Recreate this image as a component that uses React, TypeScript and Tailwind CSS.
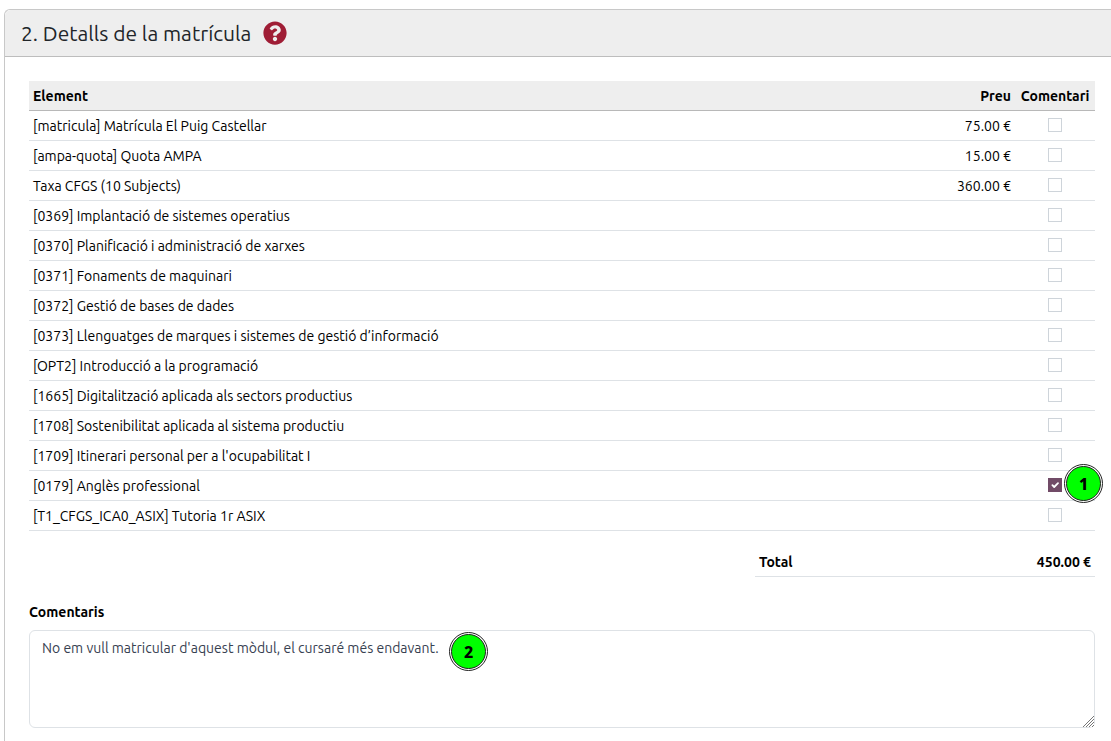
import { useState } from "react";

type Line = { id: string; name: string; price?: string };

const lines: Line[] = [
  { id: "matricula", name: "[matricula] Matrícula El Puig Castellar", price: "75.00 €" },
  { id: "ampa", name: "[ampa-quota] Quota AMPA", price: "15.00 €" },
  { id: "taxa", name: "Taxa CFGS (10 Subjects)", price: "360.00 €" },
  { id: "0369", name: "[0369] Implantació de sistemes operatius" },
  { id: "0370", name: "[0370] Planificació i administració de xarxes" },
  { id: "0371", name: "[0371] Fonaments de maquinari" },
  { id: "0372", name: "[0372] Gestió de bases de dades" },
  { id: "0373", name: "[0373] Llenguatges de marques i sistemes de gestió d’informació" },
  { id: "opt2", name: "[OPT2] Introducció a la programació" },
  { id: "1665", name: "[1665] Digitalització aplicada als sectors productius" },
  { id: "1708", name: "[1708] Sostenibilitat aplicada al sistema productiu" },
  { id: "1709", name: "[1709] Itinerari personal per a l'ocupabilitat I" },
  { id: "0179", name: "[0179] Anglès professional" },
  { id: "tutoria", name: "[T1_CFGS_ICA0_ASIX] Tutoria 1r ASIX" },
];

function Marker({ value, className }: { value: number; className: string }) {
  return (
    <span
      className={`absolute z-10 flex size-[39px] items-center justify-center rounded-full border border-[#222222] bg-white p-px ${className}`}
    >
      <span className="flex size-full items-center justify-center rounded-full border border-[#222222] bg-[#00ff00] font-['Noto_Sans',sans-serif] text-base font-extrabold text-black">
        {value}
      </span>
    </span>
  );
}

function CommentCheckbox({
  label,
  checked,
  onChange,
}: {
  label: string;
  checked: boolean;
  onChange: () => void;
}) {
  return (
    <span className="relative block size-3.5">
      <input
        type="checkbox"
        aria-label={label}
        checked={checked}
        onChange={onChange}
        className="peer block size-3.5 appearance-none border border-[#ced4da] bg-white checked:border-[#714b67] checked:bg-[#714b67]"
      />
      <svg
        viewBox="0 0 14 14"
        className="pointer-events-none absolute inset-0 hidden size-3.5 peer-checked:block"
        fill="none"
        stroke="white"
        strokeWidth="1.8"
        strokeLinecap="round"
        strokeLinejoin="round"
      >
        <path d="M4.400 7.200 6.200 9 10 5.200" />
      </svg>
    </span>
  );
}

export default function App() {
  const [selected, setSelected] = useState<string[]>(["0179"]);
  const [comment, setComment] = useState(
    "No em vull matricular d'aquest mòdul, el cursaré més endavant.",
  );

  const toggle = (id: string) =>
    setSelected((current) =>
      current.includes(id) ? current.filter((item) => item !== id) : [...current, id],
    );

  return (
    <div className="flex min-h-screen flex-col overflow-x-hidden bg-white pt-[9px] pl-1 font-['Ubuntu','Noto_Sans',sans-serif] text-sm text-black">
      <section className="flex-1 rounded-tl-md border-t border-l border-[#c8c8c8]">
        <header className="flex h-[47px] items-center gap-3 rounded-tl-md border-b border-[#bdbdbd] bg-[#eeeeee] pl-4">
          <h2 className="text-[21px] text-[#212529]">2. Detalls de la matrícula</h2>
          <button type="button" aria-label="Ajuda" className="block">
            <svg viewBox="0 0 512 512" className="size-6" fill="#9f1d35">
              <path d="M504 256c0 137-111 248-248 248S8 393 8 256 119 8 256 8s248 111 248 248zM262.700 90c-54.500 0-89.300 23-116.500 63.800-3.500 5.300-2.400 12.400 2.700 16.300l34.700 26.300c5.200 3.900 12.600 3 16.700-2.100 17.900-22.700 30.100-35.800 57.300-35.800 20.400 0 45.700 13.100 45.700 33 0 15-12.400 22.700-32.500 34C247.100 238.500 216 254.900 216 296v4c0 6.600 5.400 12 12 12h56c6.600 0 12-5.400 12-12v-1.300c0-28.500 83.200-29.600 83.200-106.700 0-58-60.200-102-116.500-102zM256 338c-25.400 0-46 20.600-46 46s20.600 46 46 46 46-20.600 46-46-20.600-46-46-46z" />
            </svg>
          </button>
        </header>

        <div className="flex flex-col pt-6 pr-4 pb-3 pl-6">
          <table className="w-full border-collapse">
            <thead>
              <tr className="h-[29px] border-b border-[#b8b8b8] bg-[#eeeeee]">
                <th className="px-1 pt-0.5 text-left font-bold">Element</th>
                <th className="w-24 px-1 pt-0.5 text-right font-bold">Preu</th>
                <th className="w-20 px-1 pt-0.5 text-center font-bold">Comentari</th>
              </tr>
            </thead>
            <tbody>
              {lines.map((line) => (
                <tr key={line.id} className="h-[30px] border-b border-[#dee2e6]">
                  <td className="px-1 pt-0.5">{line.name}</td>
                  <td className="px-1 pt-0.5 text-right">{line.price}</td>
                  <td>
                    <div className="relative flex items-center justify-center">
                      <CommentCheckbox
                        label={line.name}
                        checked={selected.includes(line.id)}
                        onChange={() => toggle(line.id)}
                      />
                      {line.id === "0179" && (
                        <Marker value={1} className="-top-3.5 left-[49px]" />
                      )}
                    </div>
                  </td>
                </tr>
              ))}
            </tbody>
          </table>

          <table className="mt-4 w-[340px] max-w-full self-end border-collapse">
            <tbody>
              <tr className="h-[30px] border-b border-[#dee2e6]">
                <th scope="row" className="px-1 pt-0.5 text-left font-bold">
                  Total
                </th>
                <td className="px-1 pt-0.5 text-right font-bold">450.00 €</td>
              </tr>
            </tbody>
          </table>

          <label htmlFor="comments" className="mt-[25px] font-bold">
            Comentaris
          </label>
          <div className="relative mt-2">
            <textarea
              id="comments"
              value={comment}
              onChange={(event) => setComment(event.target.value)}
              className="block h-[98px] w-full resize-y rounded-md border border-[#dee2e6] bg-white px-3 py-[7px] text-[#374151] outline-none"
            />
            <svg
              aria-hidden="true"
              viewBox="0 0 11 11"
              className="pointer-events-none absolute right-px bottom-px size-[11px] bg-white"
              stroke="#777777"
              strokeWidth="1"
            >
              <path d="M0 11 11 0M3 11 11 3M6 11 11 6M9 11 11 9" />
            </svg>
            <Marker value={2} className="top-0.5 left-[420px]" />
          </div>
        </div>
      </section>
    </div>
  );
}
